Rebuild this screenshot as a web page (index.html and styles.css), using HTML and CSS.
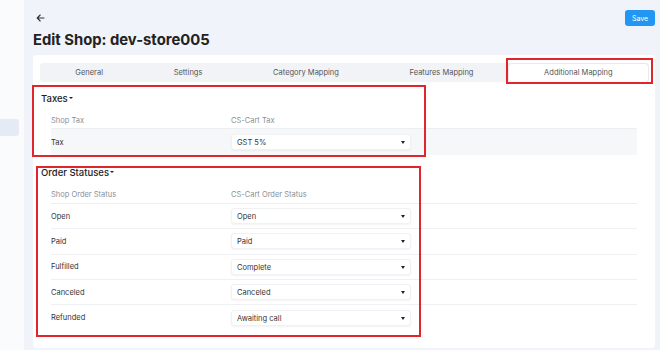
FILE: index.html
```html
<!DOCTYPE html>
<html lang="en">
<head>
    <meta charset="UTF-8">
    <title>Edit Shop</title>
    <link rel="stylesheet" href="styles.css">
</head>
<body>
<div class="page">
    <div class="sidebar">
        <div class="nav-item"></div>
    </div>
    <div class="main">
        <div class="top-bar">
            <span class="back">
                <svg width="9" height="8" viewBox="0 0 9 8"><path d="M8 4H1.2M4.2 1L1.2 4l3 3" fill="none" stroke="#333" stroke-width="1.1" stroke-linecap="round" stroke-linejoin="round"/></svg>
            </span>
            <button class="save-btn">Save</button>
        </div>
        <h1 class="title">Edit Shop: dev-store005</h1>

        <div class="card">
            <ul class="tabs">
                <li>General</li>
                <li>Settings</li>
                <li>Category Mapping</li>
                <li>Features Mapping</li>
                <li class="active">Additional Mapping</li>
            </ul>

            <div class="section taxes">
                <div class="section-title">Taxes<span class="caret"></span></div>
                <div class="map-table">
                    <div class="map-head">
                        <span>Shop Tax</span>
                        <span>CS-Cart Tax</span>
                    </div>
                    <div class="map-row shaded">
                        <span>Tax</span>
                        <div class="select">GST 5%</div>
                    </div>
                </div>
            </div>

            <div class="section orders">
                <div class="section-title">Order Statuses<span class="caret"></span></div>
                <div class="map-table">
                    <div class="map-head">
                        <span>Shop Order Status</span>
                        <span>CS-Cart Order Status</span>
                    </div>
                    <div class="map-row">
                        <span>Open</span>
                        <div class="select">Open</div>
                    </div>
                    <div class="map-row">
                        <span>Paid</span>
                        <div class="select">Paid</div>
                    </div>
                    <div class="map-row">
                        <span>Fulfilled</span>
                        <div class="select">Complete</div>
                    </div>
                    <div class="map-row">
                        <span>Canceled</span>
                        <div class="select">Canceled</div>
                    </div>
                    <div class="map-row last">
                        <span>Refunded</span>
                        <div class="select">Awaiting call</div>
                    </div>
                </div>
            </div>
        </div>
    </div>

    <!-- red annotation boxes drawn over the screenshot -->
    <div class="mark mark-tab"></div>
    <div class="mark mark-taxes"></div>
    <div class="mark mark-orders"></div>
</div>
</body>
</html>
```

FILE: styles.css
```css
*{
    padding: 0;
    margin: 0;
    box-sizing: border-box;
}
ul{
    list-style: none;
}
body{
    background: #f0f3f9;
    font-family: Inter, "Noto Sans", sans-serif;
    color: #333;
    width: 660px;
    height: 350px;
    overflow: hidden;
}
.page{
    position: relative;
    display: flex;
    height: 350px;
}
.sidebar{
    width: 24px;
    background: #fafbfd;
    padding-top: 119px;
}
.nav-item{
    width: 19px;
    height: 17px;
    background: #e5ebf6;
    border-radius: 0 3px 3px 0;
}
.main{
    flex: 1;
    padding: 10px 5px 0 9px;
}
.top-bar{
    display: flex;
    justify-content: space-between;
    align-items: center;
    height: 16px;
}
.back{
    display: flex;
    margin-left: 3px;
}
.save-btn{
    width: 30px;
    height: 16px;
    border: none;
    border-radius: 3px;
    background: #2196f3;
    color: #fff;
    font-family: Inter, sans-serif;
    font-size: 7px;
}
.title{
    margin-top: 4px;
    height: 20px;
    line-height: 20px;
    font-size: 14.8px;
    font-weight: 700;
    color: #222;
}
.card{
    margin-top: 5px;
    background: #fff;
    border-radius: 4px;
    padding: 8px 6px 18px 7px;
}
.tabs{
    display: flex;
    height: 19px;
    background: #f1f3f7;
    border-radius: 3px;
    padding: 1px 1px 0 0;
}
.tabs li{
    flex: 1 1 auto;
    text-align: center;
    font-size: 7.5px;
    line-height: 18px;
    color: #555;
}
.tabs li.active{
    background: #fff;
    border-radius: 3px;
    box-shadow: 0 0 2px rgba(0,0,0,0.15);
}
.section{
    padding: 0 12px 0 1px;
}
.taxes{
    margin-top: 10px;
}
.orders{
    margin-top: 11px;
}
.section-title{
    height: 14px;
    line-height: 14px;
    font-size: 9.5px;
    font-weight: 500;
    color: #222;
}
.caret{
    display: inline-block;
    margin-left: 1px;
    vertical-align: 3px;
    border-left: 2px solid transparent;
    border-right: 2px solid transparent;
    border-top: 2.5px solid #222;
}
.map-table{
    margin: 6px 0 0 10px;
}
.map-head,.map-row{
    display: grid;
    grid-template-columns: 180px 180px;
    align-items: center;
    font-size: 7.5px;
}
.map-head{
    height: 17px;
    color: #8a8f98;
    border-bottom: 1px solid #eceef2;
}
.orders .map-head{
    height: 18px;
}
.map-row{
    height: 25.3px;
    border-bottom: 1px solid #eef0f3;
}
.map-row.last{
    border-bottom: none;
}
.map-row.shaded{
    height: 26px;
    background: #f6f7f9;
    border-bottom: none;
}
.select{
    position: relative;
    height: 16px;
    line-height: 15px;
    padding-left: 5px;
    background: #fff;
    border: 1px solid #eff1f4;
    border-radius: 3px;
    box-shadow: 0 1px 2px rgba(0,0,0,0.05);
    color: #333;
}
.select::after{
    content: "";
    position: absolute;
    right: 5px;
    top: 6px;
    border-left: 2.5px solid transparent;
    border-right: 2.5px solid transparent;
    border-top: 3px solid #222;
}
.mark{
    position: absolute;
    border: 2px solid #e0262c;
}
.mark-tab{
    left: 506px;
    top: 58px;
    width: 147px;
    height: 26px;
}
.mark-taxes{
    left: 32px;
    top: 85px;
    width: 394px;
    height: 72px;
}
.mark-orders{
    left: 36px;
    top: 166px;
    width: 385px;
    height: 171px;
}
```
